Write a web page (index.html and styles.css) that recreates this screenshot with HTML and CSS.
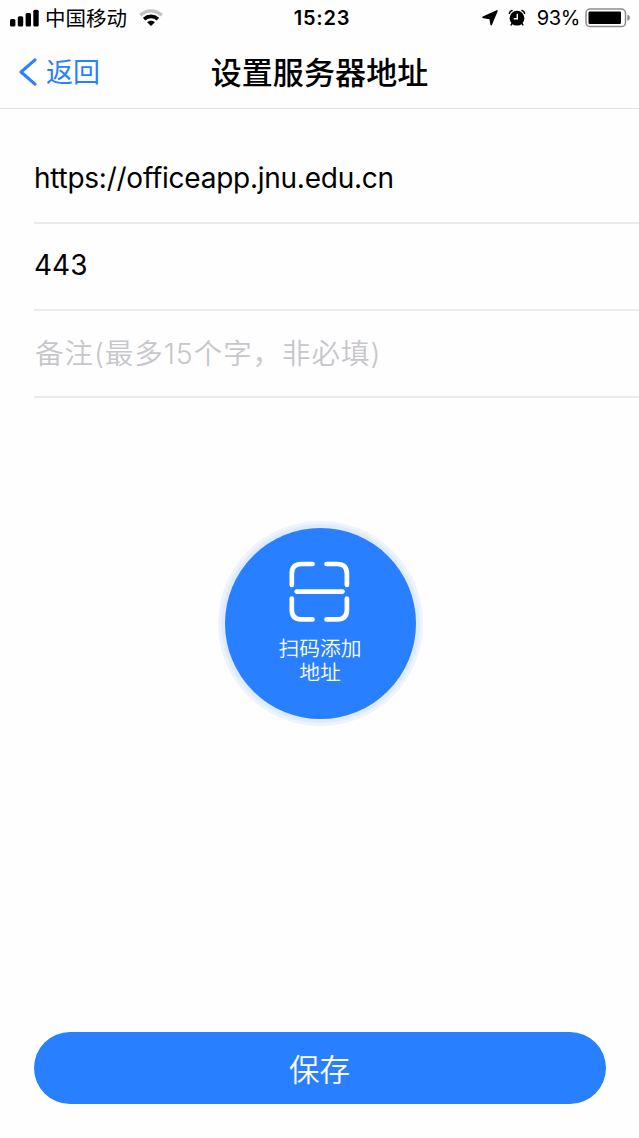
FILE: index.html
```html
<!DOCTYPE html>
<html lang="zh-CN">
  <head>
    <meta charset="UTF-8" />
    <meta name="viewport" content="width=device-width, initial-scale=1.0" />
    <title>设置服务器地址</title>
    <link rel="stylesheet" href="styles.css">
  </head>
  <body>
    <div class="screen">
      <div class="status-bar">
        <div class="status-left">
          <svg class="signal" width="29" height="18" viewBox="0 0 29 18">
            <rect x="0" y="10" width="5.4" height="7.4" rx="1.5" />
            <rect x="7.8" y="7.3" width="5.4" height="10.1" rx="1.5" />
            <rect x="15.6" y="4" width="5.4" height="13.4" rx="1.5" />
            <rect x="23.3" y="0.7" width="5.4" height="16.7" rx="1.5" />
          </svg>
          <span class="carrier">中国移动</span>
          <svg class="wifi" width="24" height="18" viewBox="0 0 24 18">
            <path d="M1.3 6.2C7.5 .4 16.5 .4 22.7 6.2" fill="none" stroke="#c2c2c2" stroke-width="3.4" />
            <path d="M5.1 10.1C9.2 6.5 14.8 6.5 18.9 10.1" fill="none" stroke="#000" stroke-width="3.6" />
            <path d="M8.1 13.2C10.3 11.2 13.7 11.2 15.9 13.2L12 17Z" />
          </svg>
        </div>
        <span class="time">15:23</span>
        <div class="status-right">
          <svg class="location" width="16" height="16" viewBox="0 0 16 16">
            <path d="M14.9 1 9.2 14.5 8.2 8.4 1.2 7.3Z" stroke="#000" stroke-width="1.7" stroke-linejoin="round" />
          </svg>
          <svg class="alarm" width="18" height="18" viewBox="0 0 18 18">
            <circle cx="9" cy="9.2" r="7.4" />
            <path d="M1.4 4.2Q1.9 2.2 4 1.5M16.6 4.2Q16.1 2.2 14 1.5M4.2 14.5 3.2 15.8M13.8 14.5l1 1.3" fill="none" stroke="#000" stroke-width="1.6" stroke-linecap="round" />
            <path d="M9.3 4.7V9.7H5.8" fill="none" stroke="#fff" stroke-width="1.4" />
          </svg>
          <span class="percent">93%</span>
          <svg class="battery" width="46" height="20" viewBox="0 0 46 20">
            <rect x="1" y="1" width="39.5" height="17.6" rx="4.2" fill="#fff" stroke="#8b8b8b" stroke-width="1.5" />
            <rect x="3.5" y="3.5" width="32.5" height="12.6" rx="1.3" />
            <path d="M42.4 6.5Q45 7.5 45 9.8T42.4 13.1Z" fill="#8b8b8b" />
          </svg>
        </div>
      </div>

      <div class="nav-bar">
        <a class="back">
          <svg width="18" height="28" viewBox="0 0 18 28">
            <path d="M16 1.8 2 14 16 26.2" fill="none" stroke="#287fff" stroke-width="3" stroke-linecap="round" stroke-linejoin="round" />
          </svg>
          <span>返回</span>
        </a>
        <h1>设置服务器地址</h1>
      </div>

      <div class="form">
        <div class="field url">https://officeapp.jnu.edu.cn</div>
        <div class="field port">443</div>
        <div class="field placeholder">备注(最多15个字，非必填)</div>
      </div>

      <div class="scan-button">
        <svg width="62" height="62" viewBox="0 0 62 62" fill="none" stroke="#fff" stroke-width="4.7" stroke-linecap="round">
          <path d="M23.5 3H12.5Q2.8 3 2.8 12.7V23.9" />
          <path d="M37.5 3H48.2Q57.9 3 57.9 12.7V23.9" />
          <path d="M2.8 37.5V48.7Q2.8 58.4 12.5 58.4H23.5" />
          <path d="M57.9 37.5V48.7Q57.9 58.4 48.2 58.4H37.5" />
          <path d="M7.7 30.6H53.5" />
        </svg>
        <span class="scan-label">扫码添加<br>地址</span>
      </div>

      <button class="save">保存</button>
    </div>
  </body>
</html>
```

FILE: styles.css
```css
body {
  margin: 0;
  background-color: #fefefe;
  font-family: Inter, "Noto Sans CJK SC", sans-serif;
  color: #000;
}

.screen {
  display: flex;
  flex-direction: column;
  align-items: center;
  height: 1138px;
  overflow: hidden;
}

.status-bar {
  display: grid;
  grid-template-columns: 1fr auto 1fr;
  align-items: center;
  box-sizing: border-box;
  width: 100%;
  height: 35px;
  padding: 0 8px 0 10px;
  font-size: 20px;
}

.status-left,
.status-right {
  display: flex;
  align-items: center;
}

.status-right {
  justify-content: flex-end;
}

.carrier {
  margin: 0 12px 0 6px;
  padding-top: 2px;
  font-size: 20.5px;
  line-height: 33px;
}

.time {
  padding-left: 3px;
  font-weight: 600;
  letter-spacing: 0.8px;
}

.location {
  margin-right: 10px;
}

.alarm {
  margin-right: 11px;
}

.percent {
  margin-right: 5px;
  letter-spacing: -0.4px;
}

.nav-bar {
  display: grid;
  grid-template-columns: 1fr auto 1fr;
  align-items: center;
  box-sizing: border-box;
  width: 100%;
  height: 74px;
  padding: 0 19px;
  border-bottom: 1px solid #e2e2e2;
}

.back {
  display: flex;
  align-items: center;
  gap: 9px;
  color: #287fff;
  font-size: 27px;
  line-height: 40px;
}

.back span {
  padding-top: 2px;
}

h1 {
  margin: 0;
  padding-top: 2px;
  font-size: 31px;
  font-weight: 500;
  line-height: 44px;
  letter-spacing: 0.1px;
}

.form {
  align-self: stretch;
  margin: 28px 0 0 34px;
}

.field {
  box-sizing: border-box;
  height: 87px;
  border-bottom: 2px solid #ebebeb;
  font-size: 28px;
  line-height: 82px;
  white-space: nowrap;
}

.url {
  letter-spacing: -0.25px;
}

.placeholder {
  padding-left: 1px;
  color: #c6c6cb;
  font-size: 28.5px;
  font-weight: 350;
  line-height: 86px;
  letter-spacing: 0.95px;
}

.scan-button {
  display: flex;
  flex-direction: column;
  align-items: center;
  box-sizing: border-box;
  width: 191px;
  height: 191px;
  margin: 130px 0 0 1px;
  padding-top: 33px;
  border-radius: 50%;
  background-color: #287fff;
  box-shadow: 0 0 0 4px #dfecff, 0 0 0 7px #edf4ff;
  color: #fff;
}

.scan-label {
  margin-top: 14px;
  font-size: 20.8px;
  font-weight: 350;
  line-height: 24px;
  text-align: center;
}

.save {
  width: 572px;
  height: 72px;
  margin: auto 0 34px;
  padding: 0 0 1px;
  border: none;
  border-radius: 36px;
  background-color: #287fff;
  color: #fff;
  font-family: inherit;
  font-size: 30.5px;
  font-weight: 350;
  cursor: pointer;
}
```
